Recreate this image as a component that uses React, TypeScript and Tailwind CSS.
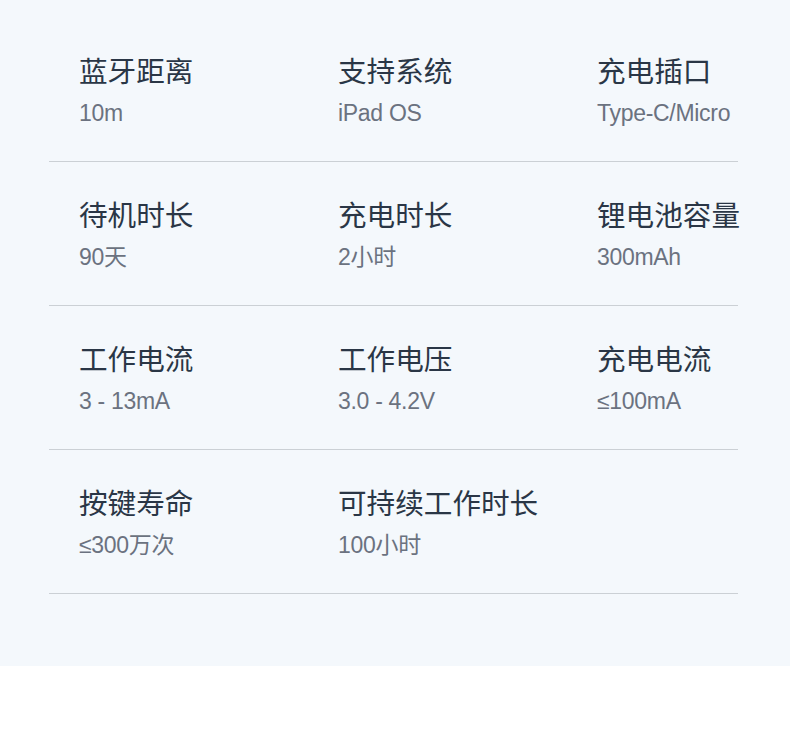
import React from 'react';

interface Spec {
  label: string;
  value: string;
}

const rows: Spec[][] = [
  [
    { label: '蓝牙距离', value: '10m' },
    { label: '支持系统', value: 'iPad OS' },
    { label: '充电插口', value: 'Type-C/Micro' },
  ],
  [
    { label: '待机时长', value: '90天' },
    { label: '充电时长', value: '2小时' },
    { label: '锂电池容量', value: '300mAh' },
  ],
  [
    { label: '工作电流', value: '3 - 13mA' },
    { label: '工作电压', value: '3.0 - 4.2V' },
    { label: '充电电流', value: '≤100mA' },
  ],
  [
    { label: '按键寿命', value: '≤300万次' },
    { label: '可持续工作时长', value: '100小时' },
  ],
];

const font = { fontFamily: '"Liberation Sans", "Noto Sans CJK SC", sans-serif' };

export default function App() {
  return (
    <div className="w-[790px] bg-white" style={font}>
      <div className="h-[666px] bg-[#f4f8fc] pt-[18px] pl-[49px] pr-[52px]">
        {rows.map((row, i) => (
          <div
            key={i}
            className="grid h-[144px] grid-cols-[259px_259px_1fr] border-b border-[#cbd0d5] pl-[30px] pt-[36px]"
          >
            {row.map((spec) => (
              <div key={spec.label} className="flex flex-col whitespace-nowrap">
                <span className="text-[28.6px] leading-[36px] text-[#2a3646]">{spec.label}</span>
                <span className="mt-[8px] text-[23px] leading-[30px] tracking-[-0.3px] text-[#6b7280]">{spec.value}</span>
              </div>
            ))}
          </div>
        ))}
      </div>
    </div>
  );
}
